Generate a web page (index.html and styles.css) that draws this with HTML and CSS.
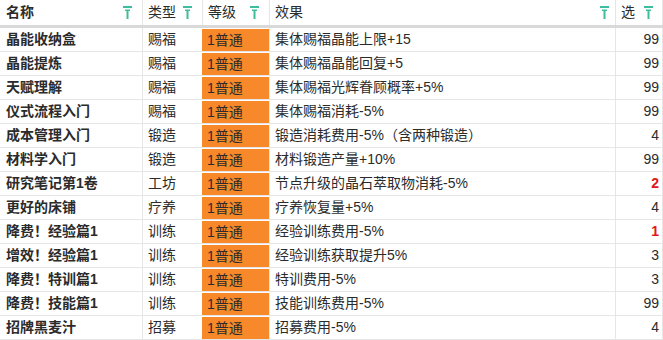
FILE: index.html
```html
<!DOCTYPE html>
<html lang="zh-CN">
<head>
<meta charset="utf-8">
<link rel="stylesheet" href="styles.css">
</head>
<body>
<div class="table">
  <div class="row head">
    <div class="cell c-name"><span class="htext bold">名称</span><svg class="filter" viewBox="0 0 9 13"><rect x="0" y="0" width="9" height="2"/><rect x="2" y="3.5" width="5" height="1.5"/><rect x="3.5" y="5" width="2" height="8"/></svg></div>
    <div class="cell c-type"><span class="htext">类型</span><svg class="filter" viewBox="0 0 9 13"><rect x="0" y="0" width="9" height="2"/><rect x="2" y="3.5" width="5" height="1.5"/><rect x="3.5" y="5" width="2" height="8"/></svg></div>
    <div class="cell c-level"><span class="htext">等级</span><svg class="filter" viewBox="0 0 9 13"><rect x="0" y="0" width="9" height="2"/><rect x="2" y="3.5" width="5" height="1.5"/><rect x="3.5" y="5" width="2" height="8"/></svg></div>
    <div class="cell c-effect"><span class="htext">效果</span><svg class="filter" viewBox="0 0 9 13"><rect x="0" y="0" width="9" height="2"/><rect x="2" y="3.5" width="5" height="1.5"/><rect x="3.5" y="5" width="2" height="8"/></svg></div>
    <div class="cell c-sel"><span class="htext">选</span><svg class="filter" viewBox="0 0 9 13"><rect x="0" y="0" width="9" height="2"/><rect x="2" y="3.5" width="5" height="1.5"/><rect x="3.5" y="5" width="2" height="8"/></svg></div>
  </div>

  <div class="row"><div class="cell c-name bold">晶能收纳盒</div><div class="cell c-type">赐福</div><div class="cell c-level"><span class="tier">1普通</span></div><div class="cell c-effect">集体赐福晶能上限+15</div><div class="cell c-sel">99</div></div>
  <div class="row"><div class="cell c-name bold">晶能提炼</div><div class="cell c-type">赐福</div><div class="cell c-level"><span class="tier">1普通</span></div><div class="cell c-effect">集体赐福晶能回复+5</div><div class="cell c-sel">99</div></div>
  <div class="row"><div class="cell c-name bold">天赋理解</div><div class="cell c-type">赐福</div><div class="cell c-level"><span class="tier">1普通</span></div><div class="cell c-effect">集体赐福光辉眷顾概率+5%</div><div class="cell c-sel">99</div></div>
  <div class="row"><div class="cell c-name bold">仪式流程入门</div><div class="cell c-type">赐福</div><div class="cell c-level"><span class="tier">1普通</span></div><div class="cell c-effect">集体赐福消耗-5%</div><div class="cell c-sel">99</div></div>
  <div class="row"><div class="cell c-name bold">成本管理入门</div><div class="cell c-type">锻造</div><div class="cell c-level"><span class="tier">1普通</span></div><div class="cell c-effect">锻造消耗费用-5%（含两种锻造）</div><div class="cell c-sel">4</div></div>
  <div class="row"><div class="cell c-name bold">材料学入门</div><div class="cell c-type">锻造</div><div class="cell c-level"><span class="tier">1普通</span></div><div class="cell c-effect">材料锻造产量+10%</div><div class="cell c-sel">99</div></div>
  <div class="row"><div class="cell c-name bold">研究笔记第1卷</div><div class="cell c-type">工坊</div><div class="cell c-level"><span class="tier">1普通</span></div><div class="cell c-effect">节点升级的晶石萃取物消耗-5%</div><div class="cell c-sel warn">2</div></div>
  <div class="row"><div class="cell c-name bold">更好的床铺</div><div class="cell c-type">疗养</div><div class="cell c-level"><span class="tier">1普通</span></div><div class="cell c-effect">疗养恢复量+5%</div><div class="cell c-sel">4</div></div>
  <div class="row"><div class="cell c-name bold">降费！经验篇1</div><div class="cell c-type">训练</div><div class="cell c-level"><span class="tier">1普通</span></div><div class="cell c-effect">经验训练费用-5%</div><div class="cell c-sel warn">1</div></div>
  <div class="row"><div class="cell c-name bold">增效！经验篇1</div><div class="cell c-type">训练</div><div class="cell c-level"><span class="tier">1普通</span></div><div class="cell c-effect">经验训练获取提升5%</div><div class="cell c-sel">3</div></div>
  <div class="row"><div class="cell c-name bold">降费！特训篇1</div><div class="cell c-type">训练</div><div class="cell c-level"><span class="tier">1普通</span></div><div class="cell c-effect">特训费用-5%</div><div class="cell c-sel">3</div></div>
  <div class="row"><div class="cell c-name bold">降费！技能篇1</div><div class="cell c-type">训练</div><div class="cell c-level"><span class="tier">1普通</span></div><div class="cell c-effect">技能训练费用-5%</div><div class="cell c-sel">99</div></div>
  <div class="row"><div class="cell c-name bold">招牌黑麦汁</div><div class="cell c-type">招募</div><div class="cell c-level"><span class="tier">1普通</span></div><div class="cell c-effect">招募费用-5%</div><div class="cell c-sel">4</div></div>
</div>
</body>
</html>
```

FILE: styles.css
```css
html, body {
  margin: 0;
  padding: 0;
  background: #ffffff;
}

body {
  font-family: "Liberation Sans", "Noto Sans CJK SC", sans-serif;
  font-size: 14px;
  color: #2b2b2b;
  width: 663px;
  height: 340px;
  overflow: hidden;
}

.table {
  display: flex;
  flex-direction: column;
  width: 663px;
}

.row {
  display: grid;
  grid-template-columns: 142px 60px 67px 346px 48px;
  height: 24px;
  border-bottom: 1px solid #e6e6e6;
  box-sizing: border-box;
}

.row.head {
  height: 28px;
  border-bottom: 3px solid #d9d9d9;
}

.cell {
  display: flex;
  align-items: center;
  padding: 0 5px;
  white-space: nowrap;
  overflow: hidden;
  line-height: 23px;
  border-left: 1px solid #e6e6e6;
  box-sizing: border-box;
}

.c-name {
  border-left: none;
  padding-left: 6px;
}

.c-sel {
  justify-content: flex-end;
  border-right: 1px solid #e6e6e6;
  padding-right: 3px;
}

.head .cell {
  justify-content: space-between;
  padding-right: 10px;
}

.head .c-effect {
  padding-right: 6px;
}

.head .c-sel {
  padding-right: 9px;
}

.bold {
  font-weight: bold;
}

.filter {
  width: 9px;
  height: 13px;
  fill: #3dbd9c;
  flex: none;
}

.row:not(.head) .c-level {
  padding: 0;
  border-left: none;
  align-items: stretch;
}

.tier {
  display: flex;
  align-items: center;
  flex: 1;
  margin-top: 1px;
  padding-left: 5px;
  background: #f7892a;
  color: #2b2b2b;
}

.warn {
  color: #e01818;
  font-weight: bold;
}
```
